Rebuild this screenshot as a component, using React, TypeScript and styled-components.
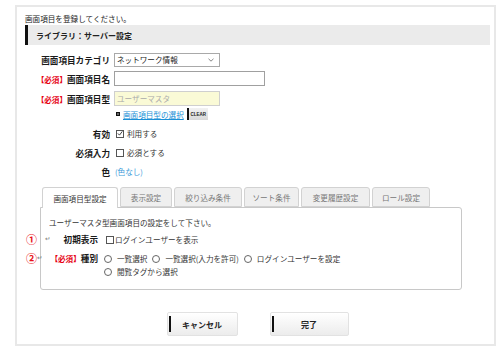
import React, { FC } from 'react';
import styled, { createGlobalStyle } from 'styled-components';

const GlobalStyle = createGlobalStyle`
  body {
    margin: 0;
    background: #fff;
    color: #333;
    font-family: 'Noto Sans CJK JP', 'Noto Sans', sans-serif;
    font-size: 7.6px;
  }
`;

const tabs = [
  { label: '画面項目型設定', width: 76, active: true },
  { label: '表示設定', width: 52 },
  { label: '絞り込み条件', width: 68 },
  { label: 'ソート条件', width: 55 },
  { label: '変更履歴設定', width: 69 },
  { label: 'ロール設定', width: 58 },
];

const CheckIcon: FC = () => (
  <svg width="7" height="7" viewBox="0 0 7 7">
    <path d="M1 3.4 L2.9 5.4 L6.2 1" fill="none" stroke="#222" strokeWidth="1" />
  </svg>
);

const Chevron: FC = () => (
  <svg width="6" height="4" viewBox="0 0 6 4">
    <path d="M0.5 0.8 L3 3.2 L5.5 0.8" fill="none" stroke="#666" strokeWidth="0.8" />
  </svg>
);

const Check: FC<{ checked?: boolean }> = ({ checked }) => (
  <SCheckBox>{checked && <CheckIcon />}</SCheckBox>
);

const Radio: FC<{ label: string }> = ({ label }) => (
  <SRadioItem>
    <SRadio />
    {label}
  </SRadioItem>
);

export default function App() {
  return (
    <>
      <GlobalStyle />
      <SFrame>
        <SIntro>画面項目を登録してください。</SIntro>
        <SSectionBar>ライブラリ：サーバー設定</SSectionBar>

        <SForm>
          <SFormRow>
            <SLabel>画面項目カテゴリ</SLabel>
            <SSelect>
              ネットワーク情報
              <Chevron />
            </SSelect>
          </SFormRow>
          <SFormRow>
            <SLabel>
              <SRequired>【必須】</SRequired>画面項目名
            </SLabel>
            <SInput $width={151} />
          </SFormRow>
          <SFormRow $top={1}>
            <SLabel>
              <SRequired>【必須】</SRequired>画面項目型
            </SLabel>
            <SInput $width={106} $readonly>
              ユーザーマスタ
            </SInput>
          </SFormRow>
          <SLinkRow>
            <SBullet />
            <SLink>画面項目型の選択</SLink>
            <SClear>CLEAR</SClear>
          </SLinkRow>
          <SFormRow $top={4}>
            <SLabel>有効</SLabel>
            <SCheckLine $gap={3}>
              <Check checked />
              利用する
            </SCheckLine>
          </SFormRow>
          <SFormRow>
            <SLabel>必須入力</SLabel>
            <SCheckLine $gap={3}>
              <Check />
              必須とする
            </SCheckLine>
          </SFormRow>
          <SFormRow>
            <SLabel>色</SLabel>
            <SColorLink>(色なし)</SColorLink>
          </SFormRow>
        </SForm>

        <STabArea>
          <STabList>
            {tabs.map((t) => (
              <STab key={t.label} $width={t.width} $active={t.active}>
                {t.label}
              </STab>
            ))}
          </STabList>
          <SPanel>
            <SPanelNote>ユーザーマスタ型画面項目の設定をして下さい。</SPanelNote>
            <SPanelRow $height={14} $top={4}>
              <SAnnot>
                <SCircled>①</SCircled>
                <SReturn $offset={8}>↵</SReturn>
              </SAnnot>
              <SPanelLabel>初期表示</SPanelLabel>
              <SCheckLine $gap={1}>
                <Check />
                ログインユーザーを表示
              </SCheckLine>
            </SPanelRow>
            <SPanelRow $height={26} $top={5}>
              <SAnnot>
                <SCircled>②</SCircled>
                <SReturn $offset={0}>↵</SReturn>
              </SAnnot>
              <SPanelLabel>
                <SRequired>【必須】</SRequired>種別
              </SPanelLabel>
              <SRadioGroup>
                <Radio label="一覧選択" />
                <Radio label="一覧選択(入力を許可)" />
                <Radio label="ログインユーザーを設定" />
                <Radio label="閲覧タグから選択" />
              </SRadioGroup>
            </SPanelRow>
          </SPanel>
        </STabArea>

        <SButtons>
          <SButton $width={71}>キャンセル</SButton>
          <SButton $width={79}>完了</SButton>
        </SButtons>
      </SFrame>
    </>
  );
}

const SFrame = styled.div`
  box-sizing: border-box;
  width: 481px;
  height: 341px;
  margin: 5px 0 0 15px;
  padding: 6px 4px 0 8px;
  border: 2px solid #e8e8e8;
`;

const SIntro = styled.div`
  height: 12px;
  line-height: 12px;
  color: #222;
`;

const SSectionBar = styled.div`
  display: flex;
  align-items: center;
  height: 20px;
  padding-left: 8px;
  background: #ebebeb;
  border-left: 3px solid #111;
  font-size: 8px;
  font-weight: bold;
  color: #222;
`;

const SForm = styled.div`
  display: flex;
  flex-direction: column;
  margin-top: 5px;
`;

const SFormRow = styled.div<{ $top?: number }>`
  display: flex;
  align-items: center;
  gap: 4px;
  height: 19px;
  margin-top: ${(p) => p.$top ?? 0}px;
`;

const SLabel = styled.div`
  width: 85px;
  text-align: right;
  font-size: 8.6px;
  font-weight: bold;
  color: #1a1a1a;
  white-space: nowrap;
`;

const SRequired = styled.span`
  color: #e60012;
  font-weight: bold;
  font-size: 7.6px;
`;

const SSelect = styled.div`
  box-sizing: border-box;
  display: flex;
  align-items: center;
  justify-content: space-between;
  width: 106px;
  height: 14px;
  padding: 0 5px 0 2px;
  border: 1px solid #a9a9a9;
  background: #fff;
  color: #222;
`;

const SInput = styled.div<{ $width: number; $readonly?: boolean }>`
  box-sizing: border-box;
  display: flex;
  align-items: center;
  width: ${(p) => p.$width}px;
  height: 15px;
  padding-left: 2px;
  border: 1px solid ${(p) => (p.$readonly ? '#cfcfcf' : '#a0a0a0')};
  background: ${(p) => (p.$readonly ? '#fafad6' : '#fff')};
  color: #aaa;
`;

const SLinkRow = styled.div`
  display: flex;
  align-items: center;
  height: 12px;
  margin-left: 90px;
`;

const SBullet = styled.span`
  box-sizing: border-box;
  width: 4px;
  height: 4px;
  margin: 0 3px 0 1px;
  border: 1px solid #111;
  background: #666;
`;

const SLink = styled.span`
  color: #1a8fd6;
  text-decoration: underline;
`;

const SClear = styled.span`
  box-sizing: border-box;
  display: flex;
  align-items: center;
  justify-content: center;
  width: 21px;
  height: 12px;
  margin-left: 3px;
  border-left: 2px solid #111;
  background: linear-gradient(#f2f2f2, #d8d8d8);
  font-family: 'Liberation Sans', Arial, sans-serif;
  font-size: 4.5px;
  font-weight: bold;
  color: #222;
`;

const SCheckLine = styled.span<{ $gap: number }>`
  display: inline-flex;
  align-items: center;
  gap: ${(p) => p.$gap}px;
  color: #333;
  white-space: nowrap;
`;

const SCheckBox = styled.span`
  box-sizing: border-box;
  display: inline-flex;
  align-items: center;
  justify-content: center;
  width: 8px;
  height: 8px;
  margin-left: 2px;
  border: 1px solid #555;
  background: #fff;
`;

const SColorLink = styled.span`
  margin-left: 1px;
  color: #3a9ad9;
`;

const STabArea = styled.div`
  width: 422px;
  margin: 6px 0 0 15px;
`;

const STabList = styled.div`
  display: flex;
  align-items: flex-end;
  gap: 2px;
  padding-left: 2px;
`;

const STab = styled.div<{ $width: number; $active?: boolean }>`
  box-sizing: border-box;
  display: flex;
  align-items: center;
  justify-content: center;
  width: ${(p) => p.$width}px;
  height: ${(p) => (p.$active ? 21 : 20)}px;
  margin-bottom: ${(p) => (p.$active ? -1 : 0)}px;
  position: relative;
  border: 1px solid #d2d2d2;
  border-bottom: ${(p) => (p.$active ? 'none' : '1px solid #d2d2d2')};
  border-radius: 3px 3px 0 0;
  background: ${(p) => (p.$active ? '#fff' : '#efefef')};
  color: ${(p) => (p.$active ? '#333' : '#777')};
`;

const SPanel = styled.div`
  box-sizing: border-box;
  height: 83px;
  padding: 8px 0 0 4px;
  border: 1px solid #c8c8c8;
  border-radius: 0 3px 3px 3px;
  background: #fff;
`;

const SPanelNote = styled.div`
  height: 13px;
  line-height: 13px;
  padding-left: 4px;
  color: #333;
`;

const SPanelRow = styled.div<{ $height: number; $top: number }>`
  position: relative;
  display: flex;
  align-items: flex-start;
  gap: 6px;
  min-height: ${(p) => p.$height}px;
  margin-top: ${(p) => p.$top}px;
  line-height: 13px;
`;

const SAnnot = styled.span`
  position: absolute;
  left: -19px;
  top: -1px;
  display: flex;
  align-items: center;
`;

const SCircled = styled.span`
  width: 11px;
  font-size: 11px;
  font-weight: bold;
  line-height: 14px;
  color: #e8141c;
`;

const SReturn = styled.span<{ $offset: number }>`
  margin-left: ${(p) => p.$offset}px;
  font-family: 'DejaVu Sans', sans-serif;
  font-size: 6.5px;
  color: #777;
`;

const SPanelLabel = styled.div`
  width: 53px;
  text-align: right;
  font-size: 8.6px;
  font-weight: bold;
  color: #1a1a1a;
  white-space: nowrap;
`;

const SRadioGroup = styled.div`
  display: flex;
  flex-wrap: wrap;
  column-gap: 5px;
  width: 258px;
`;

const SRadioItem = styled.span`
  display: inline-flex;
  align-items: center;
  gap: 5px;
  height: 13px;
  white-space: nowrap;
  color: #333;
`;

const SRadio = styled.span`
  box-sizing: border-box;
  width: 8px;
  height: 8px;
  border: 1px solid #666;
  border-radius: 50%;
  background: #fff;
`;

const SButtons = styled.div`
  display: flex;
  justify-content: center;
  gap: 32px;
  margin-top: 22px;
`;

const SButton = styled.div<{ $width: number }>`
  box-sizing: border-box;
  position: relative;
  display: flex;
  align-items: center;
  justify-content: center;
  width: ${(p) => p.$width}px;
  height: 24px;
  border: 1px solid #e2e2e2;
  border-radius: 2px;
  background: linear-gradient(#ffffff, #ececec);
  font-size: 8px;
  font-weight: bold;
  color: #222;

  &::before {
    content: '';
    position: absolute;
    left: 1px;
    top: 3px;
    bottom: 3px;
    width: 2px;
    background: #111;
  }
`;
